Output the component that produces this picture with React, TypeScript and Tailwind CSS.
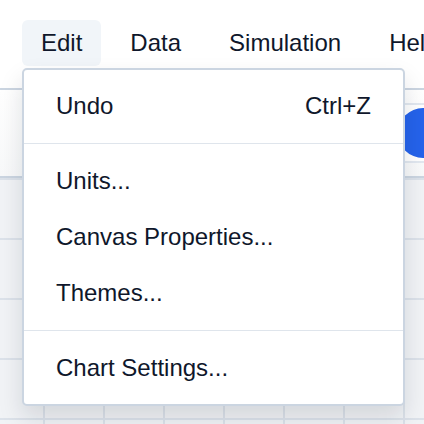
import * as React from "react";
import { clsx } from "clsx";

// 菜单栏按钮
interface MenuButtonProps {
  label: string;
  active?: boolean;
  children?: React.ReactNode;
}

const MenuButton: React.FC<MenuButtonProps> = ({ label, active, children }) => {
  return (
    <div className="relative">
      <button
        className={clsx(
          "h-[46px] px-[19px] rounded-[6px] text-[24px] leading-none text-slate-900 whitespace-nowrap",
          active && "bg-[#f1f5f9]",
        )}
      >
        {label}
      </button>
      {children}
    </div>
  );
};

// 下拉菜单
interface DropdownItem {
  label: string;
  shortcut?: string;
  separator?: boolean;
}

const Dropdown: React.FC<{ items: DropdownItem[] }> = ({ items }) => {
  return (
    <div className="absolute left-0 top-[48px] z-10 w-[383px] rounded-[5px] border-2 border-[#cbd5e1] bg-white py-2 shadow-[0_12px_24px_rgba(15,23,42,0.13)]">
      {items.map((item, index) =>
        item.separator ? (
          <div key={index} className="my-[9px] h-[1px] bg-[#dfe5ec]" />
        ) : (
          <div
            key={index}
            className="flex h-[56px] items-center justify-between px-8 text-[24px] text-slate-900"
          >
            <span>{item.label}</span>
            {item.shortcut && <span>{item.shortcut}</span>}
          </div>
        ),
      )}
    </div>
  );
};

const editItems: DropdownItem[] = [
  { label: "Undo", shortcut: "Ctrl+Z" },
  { label: "", separator: true },
  { label: "Units..." },
  { label: "Canvas Properties..." },
  { label: "Themes..." },
  { label: "", separator: true },
  { label: "Chart Settings..." },
];

export default function App() {
  return (
    <div className="h-[424px] w-[424px] overflow-hidden bg-white font-['Liberation_Sans',Arial,sans-serif]">
      {/* 菜单栏 */}
      <div className="relative z-20 flex h-[90px] gap-[10px] border-b-2 border-[#cbd5e1] bg-white pl-[22px] pt-[20px]">
        <MenuButton label="Edit" active>
          <Dropdown items={editItems} />
        </MenuButton>
        <MenuButton label="Data" />
        <MenuButton label="Simulation" />
        <MenuButton label="Help" />
      </div>

      {/* 工具栏 */}
      <div className="flex h-[88px] items-center justify-end border-b-2 border-[#cbd5e1] bg-gradient-to-b from-white to-[#f8f9fa]">
        <div className="flex h-[60px] w-[38px] items-center rounded-l-[8px] border-2 border-r-0 border-[#e2e8f0] bg-white pl-[10px]">
          <div className="h-[50px] w-[50px] shrink-0 rounded-full bg-[#2563eb]" />
        </div>
      </div>

      {/* 画布 */}
      <div className="h-[246px] bg-[#f1f3f6] bg-[linear-gradient(to_right,#dce2ea_2px,transparent_2px),linear-gradient(to_bottom,#dce2ea_2px,transparent_2px)] [background-size:60px_60px] [background-position:43px_0px]" />
    </div>
  );
}
